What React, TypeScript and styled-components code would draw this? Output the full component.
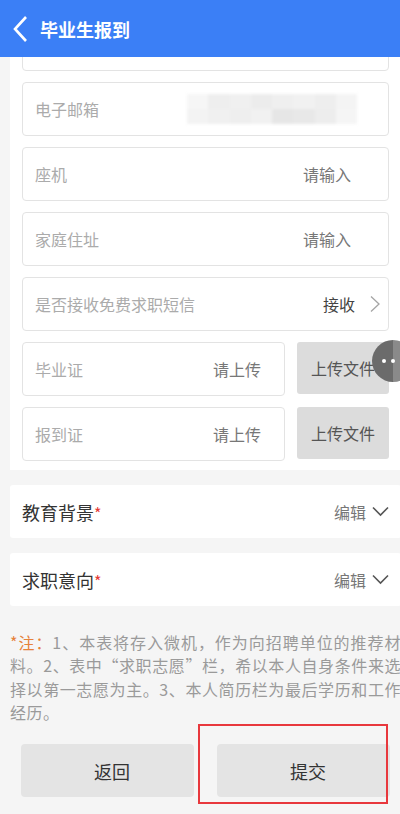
import React from "react";
import styled, { createGlobalStyle } from "styled-components";

const GlobalStyle = createGlobalStyle`
  html {
    overflow: hidden;
    background: #f5f5f5;
  }
  body {
    margin: 0;
    padding: 0;
    background: #f5f5f5;
    font-family: "Noto Sans CJK SC", "Noto Sans", sans-serif;
  }
`;

const Header = styled.div`
  position: fixed;
  top: 0;
  left: 0;
  width: 411px;
  height: 57px;
  background: #3b7ff6;
  display: flex;
  align-items: center;
  z-index: 5;
`;

const BackButton = styled.div`
  width: 40px;
  height: 57px;
  display: flex;
  align-items: center;
  justify-content: center;
`;

const Title = styled.h1`
  margin: 0;
  color: #fff;
  font-size: 18px;
  font-weight: 700;
`;

const Page = styled.div`
  width: 411px;
  padding: 0 10px 20px;
  box-sizing: border-box;
`;

const FormCard = styled.div`
  background: #fff;
  padding: 17px 12px 9px;
  display: flex;
  flex-direction: column;
  gap: 11px;
`;

const FieldBox = styled.div<{ $padRight?: number }>`
  flex: none;
  height: 54px;
  box-sizing: border-box;
  border: 1px solid #e3e3e3;
  border-radius: 4px;
  display: flex;
  align-items: center;
  justify-content: space-between;
  padding: 0 ${({ $padRight }) => $padRight ?? 37}px 0 12px;
  background: #fff;
`;

const UploadField = styled(FieldBox)`
  flex: 1;
`;

const FieldLabel = styled.span`
  font-size: 16px;
  color: #ababab;
`;

const FieldValue = styled.span<{ $dark?: boolean }>`
  font-size: 16px;
  color: ${({ $dark }) => ($dark ? "#444" : "#777")};
  display: flex;
  align-items: center;
`;

const Blurred = styled.div`
  width: 170px;
  height: 30px;
  display: grid;
  grid-template-columns: repeat(8, 1fr);
  grid-template-rows: 1fr 1fr;
  filter: blur(1.5px);
  margin-right: -6px;
`;

const BlurCell = styled.div<{ $c: string }>`
  background: ${({ $c }) => $c};
`;

const UploadRow = styled.div`
  display: flex;
  align-items: flex-start;
  gap: 12px;
`;

const UploadButton = styled.div`
  width: 92px;
  height: 52px;
  border-radius: 3px;
  background: #dcdcdc;
  color: #555;
  font-size: 16px;
  display: flex;
  align-items: center;
  justify-content: center;
`;

const SectionCard = styled.div`
  margin-top: 15px;
  height: 53px;
  background: #fff;
  border-radius: 3px;
  padding: 0 12px;
  display: flex;
  align-items: center;
  justify-content: space-between;
`;

const SectionTitle = styled.span`
  font-size: 18px;
  color: #333;
`;

const Star = styled.span`
  color: #e53935;
  font-size: 16px;
`;

const SectionAction = styled.span`
  font-size: 16px;
  color: #777;
  display: flex;
  align-items: center;
  gap: 6px;
`;

const Note = styled.p`
  margin: 25px 0 0;
  font-size: 16px;
  line-height: 23.3px;
  letter-spacing: 0.5px;
  color: #9a9a9a;
  text-align: justify;
`;

const NoteMark = styled.span`
  color: #e6813a;
`;

const ButtonRow = styled.div`
  position: relative;
  margin: 20px 11px 0;
  display: grid;
  grid-template-columns: 1fr 1fr;
  gap: 23px;
`;

const ActionButton = styled.div`
  height: 53px;
  border-radius: 4px;
  background: #e4e4e4;
  color: #333;
  font-size: 18px;
  display: flex;
  align-items: center;
  justify-content: center;
  padding-left: 9px;
`;

const Highlight = styled.div`
  position: absolute;
  left: 177px;
  top: -20px;
  width: 190px;
  height: 80px;
  box-sizing: border-box;
  border: 2px solid #e8383d;
  pointer-events: none;
`;

const FloatBall = styled.div`
  position: fixed;
  left: 372px;
  top: 340px;
  width: 42px;
  height: 42px;
  border-radius: 50%;
  background: linear-gradient(90deg, #6b6b6b 50%, #8a8a8a 50%);
  display: flex;
  align-items: center;
  gap: 5px;
  padding-left: 10px;
  box-sizing: border-box;
  z-index: 6;
`;

const Dot = styled.span`
  width: 4px;
  height: 4px;
  border-radius: 50%;
  background: #fff;
`;

const ChevronRight = () => (
  <svg width="12" height="18" viewBox="0 0 12 18" style={{ marginLeft: 14 }}>
    <path d="M2 1.5 L10 9 L2 16.5" fill="none" stroke="#a5a5a5" strokeWidth="1.3" />
  </svg>
);

const ChevronDown = () => (
  <svg width="17" height="11" viewBox="0 0 17 11">
    <path d="M1 1.5 L8.5 9 L16 1.5" fill="none" stroke="#555" strokeWidth="1.6" />
  </svg>
);

const blurColors = [
  "#f6f6f6", "#eeeeee", "#f0f0f0", "#ececec", "#efefef", "#f1f1f1", "#eeeeee", "#f4f4f4",
  "#f3f3f3", "#f0f0f0", "#eeeeee", "#f1f1f1", "#e6e6e6", "#e8e8e8", "#ededed", "#f5f5f5",
];

const fields = [
  { label: "座机", value: "请输入" },
  { label: "家庭住址", value: "请输入" },
];

export default function App() {
  return (
    <>
      <GlobalStyle />
      <Header>
        <BackButton>
          <svg width="16" height="28" viewBox="0 0 16 28">
            <path d="M14 2 L3 14 L14 26" fill="none" stroke="#fff" strokeWidth="2.6" />
          </svg>
        </BackButton>
        <Title>毕业生报到</Title>
      </Header>
      <Page>
        <FormCard>
          <FieldBox />
          <FieldBox>
            <FieldLabel>电子邮箱</FieldLabel>
            <Blurred>
              {blurColors.map((c, i) => (
                <BlurCell key={i} $c={c} />
              ))}
            </Blurred>
          </FieldBox>
          {fields.map((f) => (
            <FieldBox key={f.label}>
              <FieldLabel>{f.label}</FieldLabel>
              <FieldValue>{f.value}</FieldValue>
            </FieldBox>
          ))}
          <FieldBox $padRight={7}>
            <FieldLabel>是否接收免费求职短信</FieldLabel>
            <FieldValue $dark>
              接收
              <ChevronRight />
            </FieldValue>
          </FieldBox>
          <UploadRow>
            <UploadField $padRight={23}>
              <FieldLabel>毕业证</FieldLabel>
              <FieldValue>请上传</FieldValue>
            </UploadField>
            <UploadButton>上传文件</UploadButton>
          </UploadRow>
          <UploadRow>
            <UploadField $padRight={23}>
              <FieldLabel>报到证</FieldLabel>
              <FieldValue>请上传</FieldValue>
            </UploadField>
            <UploadButton>上传文件</UploadButton>
          </UploadRow>
        </FormCard>

        <SectionCard>
          <SectionTitle>
            教育背景<Star>*</Star>
          </SectionTitle>
          <SectionAction>
            编辑
            <ChevronDown />
          </SectionAction>
        </SectionCard>
        <SectionCard>
          <SectionTitle>
            求职意向<Star>*</Star>
          </SectionTitle>
          <SectionAction>
            编辑
            <ChevronDown />
          </SectionAction>
        </SectionCard>

        <Note>
          <NoteMark>*注：</NoteMark>1、本表将存入微机，作为向招聘单位的推荐材料。2、表中“求职志愿”栏，希以本人自身条件来选择以第一志愿为主。3、本人简历栏为最后学历和工作经历。
        </Note>

        <ButtonRow>
          <ActionButton>返回</ActionButton>
          <ActionButton>提交</ActionButton>
          <Highlight />
        </ButtonRow>
      </Page>
      <FloatBall>
        <Dot />
        <Dot />
        <Dot />
      </FloatBall>
    </>
  );
}
